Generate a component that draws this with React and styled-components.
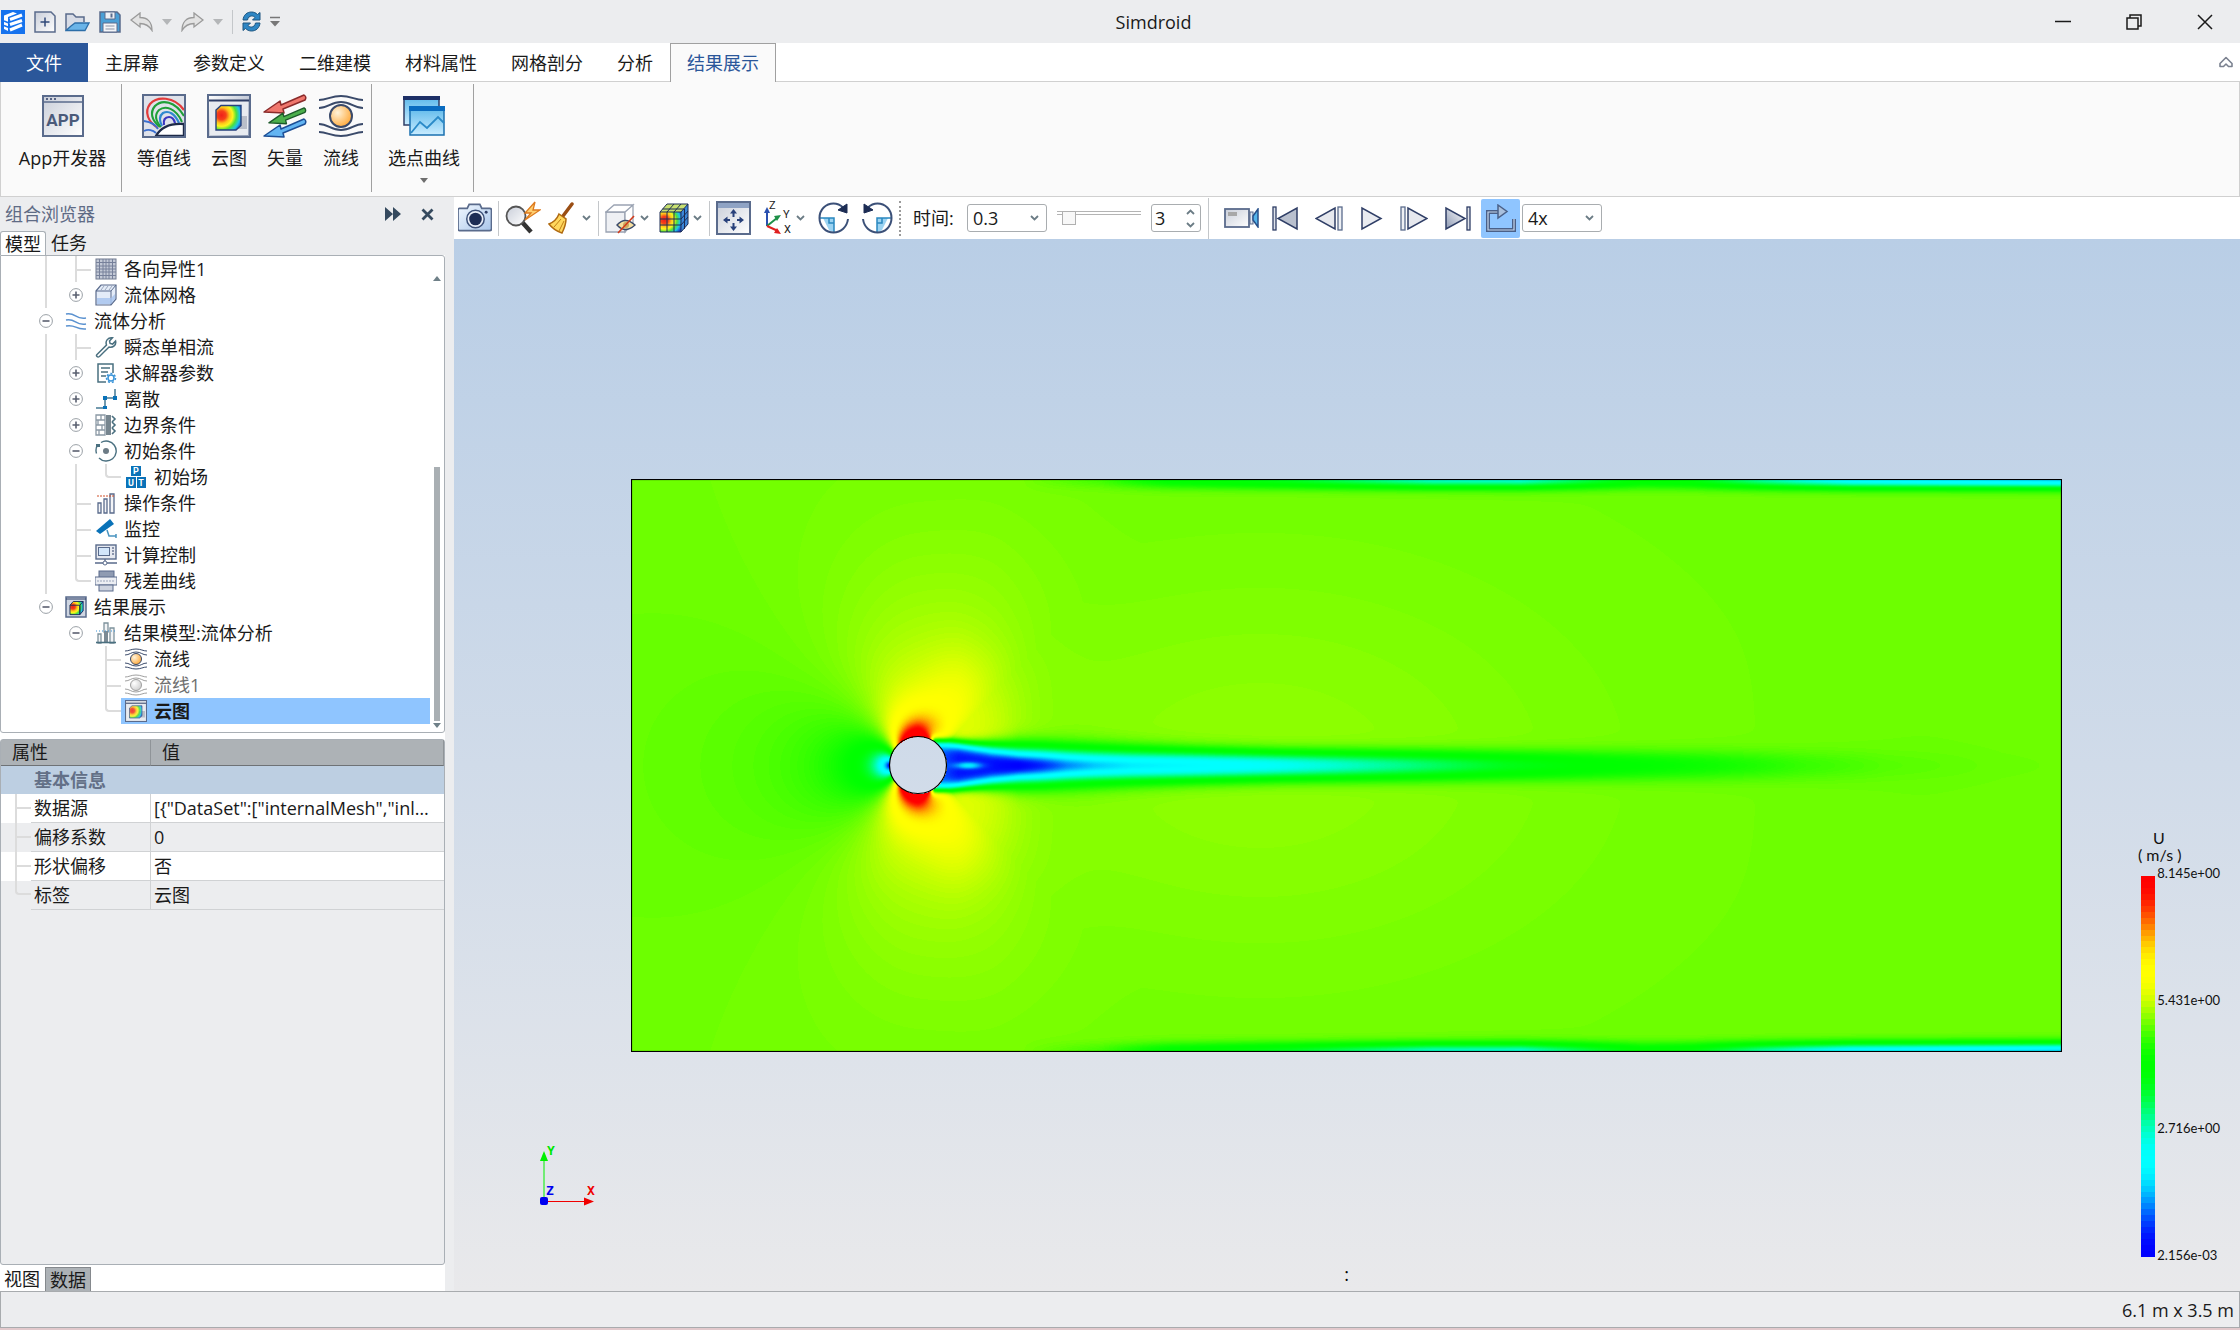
import React, { useLayoutEffect, useRef } from "react";
import styled, { createGlobalStyle, css } from "styled-components";

const GlobalStyle = createGlobalStyle`
  *, *::before, *::after { box-sizing: border-box; }
  body { margin: 0; background: #ecedef; }
  body, button, input, select, table {
    font-family: "Open Sans", "Noto Sans CJK SC", sans-serif;
    font-size: 18px;
    line-height: 26px;
    color: #1a1a1a;
  }
  button { border: 0; padding: 0; background: none; }
  svg { display: block; flex: none; }
`;

const NAVY = "#2f3e66";
const STEEL = "#5a6b8c";
const TEAL = "#4a7080";
const BLUE = "#0a72b8";

/* ---------- shared gradients ---------- */
const Defs = styled.svg`
  width: 0;
  height: 0;
  position: absolute;
`;

const Gradients = () => (
  <Defs aria-hidden="true">
    <defs>
      <linearGradient id="grey" x1="0" y1="0" x2="1" y2="1">
        <stop offset="0" stopColor="#c9ced9" />
        <stop offset="1" stopColor="#ffffff" />
      </linearGradient>
      <linearGradient id="steel" x1="0" y1="0" x2="1" y2="1">
        <stop offset="0" stopColor="#ffffff" />
        <stop offset="1" stopColor="#8d99b3" />
      </linearGradient>
      <linearGradient id="sky" x1="0" y1="0" x2="0" y2="1">
        <stop offset="0" stopColor="#5cb8ea" />
        <stop offset="1" stopColor="#c9ecff" />
      </linearGradient>
      <linearGradient id="ice" x1="0" y1="0" x2="1" y2="1">
        <stop offset="0" stopColor="#f2f8ff" />
        <stop offset="1" stopColor="#a9c6ea" />
      </linearGradient>
      <radialGradient id="ball" cx=".35" cy=".35" r=".7">
        <stop offset="0" stopColor="#fff3da" />
        <stop offset="1" stopColor="#ffa93a" />
      </radialGradient>
      <radialGradient id="ballGrey" cx=".35" cy=".35" r=".7">
        <stop offset="0" stopColor="#ffffff" />
        <stop offset="1" stopColor="#cfcfcf" />
      </radialGradient>
      <radialGradient id="heat" cx=".22" cy=".4" r=".9">
        <stop offset="0" stopColor="#f0201a" />
        <stop offset=".2" stopColor="#f5401a" />
        <stop offset=".36" stopColor="#ffc21a" />
        <stop offset=".5" stopColor="#fdf51d" />
        <stop offset=".66" stopColor="#4fe03a" />
        <stop offset=".82" stopColor="#1fc6e8" />
        <stop offset="1" stopColor="#1838c8" />
      </radialGradient>
    </defs>
  </Defs>
);

const Svg = ({ w, h, children, vb }) => (
  <svg width={w} height={h} viewBox={vb || `0 0 ${w} ${h}`} fill="none" aria-hidden="true">
    {children}
  </svg>
);

/* ---------- title bar icons ---------- */
const Logo = () => (
  <Svg w={24} h={24}>
    <rect width="24" height="24" fill="#1673ee" />
    <path d="M3 5.500 12 2l4 1.500L7 7v14l-4-2z" fill="#fff" />
    <path d="M9 9.500 21 5M9 14.500l12-4M9 20l12-5" stroke="#fff" strokeWidth="3" />
    <path d="M3 11l5 2M3 15.500l5 2" stroke="#1673ee" strokeWidth="1.500" />
  </Svg>
);
const NewIcon = () => (
  <Svg w={22} h={22}>
    <path d="M1 1h16l4 4v16H1z" fill="url(#grey)" stroke={STEEL} strokeWidth="1.500" />
    <path d="M11 6.500v9M6.500 11h9" stroke="#30497a" strokeWidth="1.500" />
  </Svg>
);
const OpenIcon = () => (
  <Svg w={25} h={20}>
    <path d="M1 18V2h7l3 3h8v5" fill="#d8dce6" stroke={STEEL} strokeWidth="1.500" />
    <path d="M1 18.500 6 14l4-3h14l-4 7.500z" fill="#6ab4e8" stroke="#2c6ea8" strokeWidth="1.300" />
  </Svg>
);
const SaveIcon = () => (
  <Svg w={22} h={22}>
    <path d="M1 1h17l3 3v17H1z" fill="#4a9fd6" stroke={STEEL} strokeWidth="1.500" />
    <path d="M6 1h10v7H6z" fill="#eef1f6" stroke={STEEL} />
    <path d="M12.500 2.500v4" stroke={STEEL} strokeWidth="2" />
    <path d="M4 12h14v9H4z" fill="#f4f5f8" stroke={STEEL} />
    <path d="M6.500 15h9M6.500 18h9" stroke="#8b93a5" />
  </Svg>
);
const UndoIcon = ({ flip }) => (
  <Svg w={23} h={20}>
    <g transform={flip ? "matrix(-1 0 0 1 23 0)" : undefined}>
      <path d="M1 8 10 1v4.500c7 0 12 4 12 13-3-5-6-7-12-7V15z" fill="#e3e3e3" stroke="#9a9a9a" strokeWidth="1.300" />
    </g>
  </Svg>
);
const Caret = ({ color = "#b4b6b8" }) => (
  <Svg w={10} h={6}>
    <path d="M0 0h10L5 6z" fill={color} />
  </Svg>
);
const MoreIcon = () => (
  <Svg w={10} h={12}>
    <path d="M0 1.500h10" stroke="#777" strokeWidth="1.500" />
    <path d="M0 5h10L5 10.500z" fill="#777" />
  </Svg>
);
const RefreshIcon = () => (
  <Svg w={19} h={21}>
    <path d="M1 9C1.500 4 5 1 9.500 1c2.500 0 4.500 1 6 2.500L18 1.500V9h-7.500l2.500-2.500C12 5.400 11 5 9.500 5 7.500 5 6 6.500 5.500 9z" fill="#2e86c4" stroke="#1c5580" />
    <path d="M18 12c-.5 5-4 8-8.500 8-2.500 0-4.500-1-6-2.500L1 19.500V12h7.500L6 14.500c1 1.100 2 1.500 3.500 1.500 2 0 3.500-1.500 4-4z" fill="#2e86c4" stroke="#1c5580" />
  </Svg>
);

/* ---------- ribbon icons ---------- */
const AppIcon = () => (
  <Svg w={42} h={42}>
    <rect x="1" y="1" width="40" height="40" fill="url(#grey)" stroke={STEEL} strokeWidth="2" />
    <path d="M1 7h40" stroke={STEEL} strokeWidth="1.500" />
    <path d="M4 4h2M8 4h2M12 4h2" stroke={NAVY} strokeWidth="1.500" />
    <text x="21" y="31" textAnchor="middle" fontFamily="Roboto, sans-serif" fontWeight="700" fontSize="17" fill="#4a5a7a">APP</text>
  </Svg>
);
const ContourIcon = () => (
  <Svg w={44} h={44}>
    <rect x="1.500" y="1.500" width="41" height="41" fill="#dfe2ea" />
    <path d="M16 34C6 28 2 18 8 10 15 2 32 2 42 16" stroke="#e23b3b" strokeWidth="2.200" />
    <path d="M18 33C9 26 8 18 13 12c7-7 20-5 29 10" stroke="#1fa038" strokeWidth="2.200" />
    <path d="M19 33c-6-7-6-13-2-17 6-5 17-2 23 12" stroke="#1fa038" strokeWidth="2" />
    <path d="M20 32c-3-6-3-10 1-13 6-3 12 1 16 10" stroke="#2f88cf" strokeWidth="2.200" />
    <path d="M22 31c-1-5 1-8 5-8 3 0 5 2 6 6" stroke="#3a35c0" strokeWidth="2.200" />
    <path d="M2 27c6 1 12 4 14 8M2 37c4-2 9-1 12 2" stroke="#3a6fd0" strokeWidth="1.800" />
    <path d="M14 42c5-9 14-13 28-12v12z" fill="#fff" stroke="#1e2a48" strokeWidth="2.400" />
    <rect x="1" y="1" width="42" height="42" stroke={STEEL} strokeWidth="2" />
  </Svg>
);
const CloudIcon = ({ size = 44, pale }) => (
  <Svg w={size} h={size} vb="0 0 44 44">
    <rect x="1" y="1" width="42" height="42" fill={pale ? "#d7dbe2" : "url(#steel)"} stroke={STEEL} strokeWidth="2" />
    <rect x="3" y="7" width="38" height="34" fill="#e8ebf0" />
    <path d="M2 6.500h40" stroke={NAVY} strokeWidth="1.800" />
    <path d="M28 22h12v13H20z" fill="#b9bec9" />
    <path d="M14 11.500h20v20L29 36H9V16z" fill="url(#heat)" stroke="#25407c" strokeWidth="1.400" opacity={pale ? 0.85 : 1} />
  </Svg>
);
const Arrow3 = ({ y, fill, stroke }) => (
  <path d={`M1 ${y + 17} 17 ${y + 6}l1 4L41 ${y}q3 2 1 5L20 ${y + 14}l1 4z`} fill={fill} stroke={stroke} strokeWidth="1.500" strokeLinejoin="round" />
);
const VectorIcon = () => (
  <Svg w={44} h={44}>
    <Arrow3 y={1} fill="#f0776d" stroke="#8a2b2b" />
    <g transform="translate(5 13) scale(.88)"><Arrow3 y={1} fill="#4cb04c" stroke="#1d5a2a" /></g>
    <Arrow3 y={25} fill="#62b4f2" stroke="#1d4f96" />
  </Svg>
);
const StreamIcon = ({ size = 44, grey }) => {
  const s = grey ? "#a0a0a0" : "#3a4a6a";
  return (
    <Svg w={size} h={size} vb="0 0 44 44">
      <path d="M0 6c8 0 12-4 22-4s14 4 22 4M0 14c9 0 12-6 22-6s13 6 22 6M0 30c9 0 12 6 22 6s13-6 22-6M0 38c8 0 12 4 22 4s14-4 22-4" stroke={s} strokeWidth="2" />
      <circle cx="22" cy="22" r="11" fill={grey ? "url(#ballGrey)" : "url(#ball)"} stroke={s} strokeWidth="2" />
    </Svg>
  );
};
const CurveIcon = () => (
  <Svg w={42} h={42}>
    <rect x="1" y="2" width="35" height="28" fill="url(#sky)" stroke={NAVY} strokeWidth="1.500" />
    <rect x="0" y="1" width="37" height="4" fill="#1c2f66" />
    <rect x="7" y="12" width="34" height="28" fill="url(#sky)" stroke="#1a70b0" strokeWidth="1.500" />
    <rect x="6" y="11" width="36" height="5" fill="#0a6cc0" />
    <path d="m8 38 9-11 7 6 11-11 6 6" stroke="#2a8ac8" strokeWidth="1.800" />
  </Svg>
);

/* ---------- view toolbar icons ---------- */
const CameraIcon = () => (
  <Svg w={34} h={30} vb="0 0 35 30">
    <path d="M1.500 5h8l2-4h11l2 4h8q2 0 2 2v19q0 2-2 2h-31q-1.500 0-1.500-2V7q0-2 1.500-2z" fill="url(#ice)" stroke={STEEL} strokeWidth="1.800" />
    <circle cx="18" cy="16" r="9" fill="#e8eef8" stroke="#3c5078" strokeWidth="1.500" />
    <circle cx="18" cy="16" r="6.500" fill="#1c2c54" />
    <circle cx="29" cy="9" r="1.500" fill={NAVY} />
  </Svg>
);
const SearchIcon = () => (
  <Svg w={36} h={34}>
    <path d="m17 21 9 10" stroke="#333" strokeWidth="4.500" />
    <circle cx="11" cy="15" r="9.500" fill="url(#grey)" stroke="#555" strokeWidth="1.800" />
    <path d="M30 1 20 12h6l-6 7 15-10h-7z" fill="#ffcf70" stroke="#dd7a1e" strokeWidth="1.300" />
  </Svg>
);
const BroomIcon = () => (
  <Svg w={27} h={32}>
    <path d="m24 2-9 12" stroke="#9a4e14" strokeWidth="3.500" strokeLinecap="round" />
    <path d="M11 12l7 5c0 6-2 10-4 14C8 29 4 26 1 22c5-2 8-5 10-10z" fill="#ffd75e" stroke="#b06a10" strokeWidth="1.500" />
    <path d="M13 17 6 25M16 19l-5 10" stroke="#c08018" />
  </Svg>
);
const Chevron = ({ up }) => (
  <Svg w={9} h={6}>
    <path d={up ? "M1 5 4.500 1.500 8 5" : "M1 1l3.500 3.500L8 1"} stroke="#6b7c85" strokeWidth="1.800" />
  </Svg>
);
const BoxIcon = () => (
  <Svg w={31} h={31}>
    <path d="M1 9h19v20H1z" fill="#eef0f4" stroke="#9aa3b2" strokeWidth="1.300" />
    <path d="M1 9 9 2h19l-8 7zM28 2v18l-8 9V9z" fill="#fff" stroke="#9aa3b2" strokeWidth="1.300" />
    <path d="M12 22q8-9 18 0-10 9-18 0z" fill="#f6dfa0" stroke="#3a4a6a" strokeWidth="1.400" />
    <circle cx="21" cy="22" r="3" fill="#caa860" />
    <path d="M13 30 29 13" stroke="#d23a1a" strokeWidth="1.600" />
  </Svg>
);
const CubeIcon = ({ size = 30 }) => (
  <Svg w={size} h={size} vb="0 0 30 30">
    <path d="M1 9h21v20H1z" fill="url(#heat)" />
    <path d="M1 9 8 1h21l-7 8z" fill="#c8e070" />
    <path d="m22 9 7-8v20l-7 8z" fill="#3b86d8" />
    <path d="M1 9h21v20H1zM1 16h21M1 22h21M8 9v20M15 9v20M1 9l7-8h21l-7 8M29 1v20l-7 8M8 9l7-8M15 9l7-8M3.500 6h22v20M22 16l7-8M22 22l7-8" stroke="#1c2c54" strokeWidth="1" />
  </Svg>
);
const FitIcon = () => (
  <Svg w={35} h={34}>
    <rect x="1" y="1" width="33" height="32" fill="url(#grey)" stroke={STEEL} strokeWidth="2" />
    <rect x="2" y="2" width="31" height="5" fill="#8fa3c4" />
    <path d="M17.500 11v5M17.500 22v5M10 19h4M21 19h4" stroke="#28407a" strokeWidth="2" />
    <path d="M14 12.500 17.500 8l3.500 4.500zM14 25.500l3.500 4.500 3.500-4.500zM11.500 15.500 7 19l4.500 3.500zM23.500 15.500 28 19l-4.500 3.500z" fill="#28407a" />
  </Svg>
);
const AxesIcon = () => (
  <Svg w={28} h={34}>
    <path d="M3 25V10" stroke="#2a50b0" strokeWidth="2" />
    <path d="M0 12 3 6l3 6z" fill="#2a50b0" />
    <path d="m3 25 10-8" stroke="#1e9048" strokeWidth="2" />
    <path d="m10 15 7-1-4 6z" fill="#1e9048" />
    <path d="m3 25 11 5" stroke="#e02020" strokeWidth="2" />
    <path d="m13 27 4 6-7-1z" fill="#e02020" />
    <g fontFamily="Roboto, sans-serif" fontSize="11" fill="#222">
      <text x="5" y="8">Z</text>
      <text x="19" y="17">Y</text>
      <text x="20" y="32">X</text>
    </g>
  </Svg>
);
const RotateIcon = ({ flip }) => (
  <Svg w={31} h={32}>
    <g transform={flip ? "matrix(-1 0 0 1 31 0)" : undefined}>
      <path d="M1.500 16H16v14C7 30 1.500 24 1.500 16z" fill="#fff" />
      <path d="M5 16h11v14q-3 0-5-2z" fill="#9bd3f2" />
      <path d="M1.500 16H16v14M11 16v5h5" stroke="#2a88c0" strokeWidth="1.500" />
      <path d="M30 17c-1 8-7 13.500-14.500 13.500C8 30.500 1.500 24.500 1.500 16S8 1.500 15.500 1.500c4 0 7 1.500 9.500 4" stroke="#3b5078" strokeWidth="2" />
      <path d="M29 2v9l-9-3z" fill="#1c2c54" stroke="#1c2c54" />
    </g>
  </Svg>
);
const VideoIcon = () => (
  <Svg w={36} h={20}>
    <rect x="1" y="1" width="24" height="18" fill="url(#grey)" stroke={STEEL} strokeWidth="1.800" />
    <rect x="4" y="4" width="9" height="4" fill="#a8a8a8" />
    <rect x="26" y="4" width="3" height="12" fill="#dfe6f2" stroke={STEEL} />
    <path d="m29 8 5-7v18l-5-7z" fill="#55b4ea" stroke="#28508a" strokeWidth="1.500" />
  </Svg>
);
const FirstIcon = ({ flip }) => (
  <Svg w={26} h={25}>
    <g transform={flip ? "matrix(-1 0 0 1 26 0)" : undefined}>
      <path d="M25 2v21L6 12.500z" fill={flip ? "url(#steel)" : "#b9c0ce"} stroke={NAVY} strokeWidth="1.500" />
      <rect x="1" y="1" width="3" height="23" fill="#dfe3ea" stroke={NAVY} strokeWidth="1.300" />
    </g>
  </Svg>
);
const StepIcon = ({ flip }) => (
  <Svg w={28} h={25}>
    <g transform={flip ? "matrix(-1 0 0 1 28 0)" : undefined}>
      <path d="M20 2v21L1 12.500z" fill="#e6e8ee" stroke={NAVY} strokeWidth="1.500" />
      <rect x="23" y="1" width="4" height="23" fill="#eef0f4" stroke={STEEL} strokeWidth="1.300" />
    </g>
  </Svg>
);
const PlayIcon = () => (
  <Svg w={23} h={25}>
    <path d="M2 2v21l19-10.500z" fill="#e9ebf0" stroke={NAVY} strokeWidth="1.500" />
  </Svg>
);
const LoopIcon = () => (
  <Svg w={30} h={28}>
    <path d="M13 8H2v18h26V15" stroke="#4a6088" strokeWidth="4" />
    <path d="M13 8H2v18h26V15" stroke="#c6d6ea" strokeWidth="1.200" />
    <path d="m12 1 9 6.500-9 6.500z" fill="#a9c0dd" stroke="#4a6088" strokeWidth="1.500" />
  </Svg>
);

/* ---------- tree icons ---------- */
const TreeIcons = {
  mesh: () => (
    <Svg w={22} h={22}>
      <rect x="1" y="1" width="20" height="20" fill="#c3c9d6" stroke="#707a90" />
      <path d="M4.500 1v20M8 1v20M11 1v20M14 1v20M17.500 1v20M1 4.500h20M1 8h20M1 11h20M1 14h20M1 17.500h20" stroke="#76809a" />
    </Svg>
  ),
  fluidMesh: () => (
    <Svg w={22} h={22}>
      <path d="M1 7 6 1h15v14l-5 6H1z" fill="#e4ecf8" stroke={STEEL} strokeWidth="1.200" />
      <path d="M1 7h15v14M16 7l5-6" stroke={STEEL} />
      <path d="M9 2 6 6M13 2l-3 4M17 2l-3 4" stroke="#9aa6bc" />
      <path d="M2 14h14l4-4v5l-4 5H2z" fill="#a5c3ee" opacity=".8" />
    </Svg>
  ),
  fluid: () => (
    <Svg w={22} h={18}>
      <path d="M1 2c10-2 9 6 20 4M1 8c10-2 9 6 20 4M1 14c10-2 9 4 20 3" stroke="#5b92d0" strokeWidth="1.500" />
    </Svg>
  ),
  wrench: () => (
    <Svg w={22} h={22}>
      <path d="M2 18.500 11.500 9C10 5 13 1 17.500 1.800L14.500 5l.6 2.500 2.500.6 3-3C21.500 9 18 12 14 11l-9.500 9.500q-1.500 1-2.500 0-1-1 0-2z" fill="#fff" stroke={TEAL} strokeWidth="1.500" />
    </Svg>
  ),
  solver: () => (
    <Svg w={22} h={22}>
      <path d="M11 20H3V2h15v9" stroke={TEAL} strokeWidth="1.500" />
      <path d="M6 6h9M6 10h7M6 14h5" stroke={TEAL} strokeWidth="1.400" />
      <circle cx="16" cy="16" r="3" stroke="#3a94d8" strokeWidth="1.500" />
      <circle cx="16" cy="16" r="4.500" stroke="#3a94d8" strokeWidth="1.500" strokeDasharray="2 2" />
    </Svg>
  ),
  discrete: () => (
    <Svg w={22} h={22}>
      <path d="M1 20h9V10h10V1" stroke="#467a94" strokeWidth="1.500" />
      <path d="M8 18h4v3H8zM8 8h4v4H8zM18 8h4v4h-4z" fill={BLUE} />
    </Svg>
  ),
  boundary: () => (
    <Svg w={22} h={22}>
      <path d="M1 1h9v20H1zM1 6h9M1 11h9M1 16h9M6 1v5M3 6v5M7 11v5M4 16v5" stroke="#8b99a5" strokeWidth="1.300" />
      <rect x="11" y="1" width="5" height="20" fill="#76858f" />
      <path d="m17 2 3 3-3 3M17 8l3 3-3 3M17 14l3 3-3 3" stroke={TEAL} strokeWidth="1.600" />
    </Svg>
  ),
  initial: () => (
    <Svg w={22} h={22}>
      <path d="M6 2.500A10 10 0 1 1 4 18M3 4.500a10 10 0 0 0-1.500 9" stroke={TEAL} strokeWidth="1.400" />
      <path d="M1 4h4v3H1z" fill={TEAL} />
      <circle cx="11" cy="11" r="3" fill="#6c7b85" />
    </Svg>
  ),
  field: () => (
    <Svg w={22} h={22}>
      <path d="M6 0h10v10H6zM1 11h10v11H1zM12 11h9v11h-9z" fill={BLUE} />
      <g fontFamily="Roboto, sans-serif" fontSize="9" fontWeight="700" fill="#fff" textAnchor="middle">
        <text x="11" y="8">P</text>
        <text x="6" y="20">U</text>
        <text x="16" y="20">T</text>
      </g>
    </Svg>
  ),
  operation: () => (
    <Svg w={22} h={22}>
      <path d="M3 11h3v10H3zM9 7h3v14H9zM15 2h4v19h-4z" fill="#f4f5f8" stroke={STEEL} strokeWidth="1.300" />
      <path d="M2 4h18" stroke="#d0502a" strokeDasharray="2 1" />
    </Svg>
  ),
  monitor: () => (
    <Svg w={22} h={22}>
      <path d="M1 13 15 1l4 5L5 16z" fill={BLUE} />
      <path d="m12 12 2 6h7M21 16v4" stroke="#4a94c0" strokeWidth="1.500" />
    </Svg>
  ),
  control: () => (
    <Svg w={22} h={22}>
      <rect x="1" y="1" width="20" height="14" fill="#e6e9f0" stroke={STEEL} strokeWidth="1.400" />
      <rect x="3.500" y="3.500" width="11" height="8" fill="#d3e6fa" stroke={STEEL} />
      <path d="M17 4h2M17 7h2M17 10h2" stroke={NAVY} />
      <path d="M10 15v3M0 19h22" stroke={STEEL} strokeWidth="1.300" />
      <circle cx="10" cy="19" r="2" fill="#fff" stroke={STEEL} />
    </Svg>
  ),
  residual: () => (
    <Svg w={22} h={22}>
      <rect x="4" y="1" width="15" height="7" fill="#8f9bb2" stroke={STEEL} />
      <rect x="0" y="7" width="22" height="8" fill="#eceef3" stroke={STEEL} />
      <path d="M2 11h18" stroke="#9aa5ba" strokeDasharray="2 1" />
      <rect x="4" y="15" width="14" height="6" fill="#cdd3df" stroke={STEEL} />
    </Svg>
  ),
  results: () => (
    <Svg w={22} h={22}>
      <rect x="1" y="1" width="20" height="20" fill="#cfd6e2" stroke={STEEL} strokeWidth="1.500" />
      <path d="M1 3h20" stroke={NAVY} />
      <g transform="translate(4.500 5) scale(.47)">
        <path d="M1 9h21v20H1zM1 9 8 1h21l-7 8M29 1v20l-7 8V9" fill="url(#heat)" stroke="#1c2c54" strokeWidth="2" />
      </g>
    </Svg>
  ),
  model: () => (
    <Svg w={22} h={22}>
      <path d="M3 12h3v9H3zM15 6h4v15h-4zM9 1h4v9H9z" fill="#f2f4f6" stroke="#7e929c" strokeWidth="1.300" />
      <path d="M9 9h4v12H9z" fill="#7c8b95" />
      <path d="M1 20.500h20" stroke={TEAL} strokeWidth="1.600" />
      <path d="M1 9h20" stroke="#3a94d8" strokeDasharray="1 2" />
    </Svg>
  ),
  stream: () => <StreamIcon size={22} />,
  streamOff: () => <StreamIcon size={22} grey />,
  cloud: () => <CloudIcon size={22} pale />,
};

/* ---------- frame ---------- */
const Page = styled.div`
  min-height: 100vh;
  display: flex;
  flex-direction: column;
  background: #ecedef;
`;
const TitleBar = styled.header`
  height: 43px;
  flex: none;
  display: flex;
  align-items: center;
`;
const QuickAccess = styled.div`
  display: flex;
  align-items: center;
  gap: 9px;
  padding-left: 1px;
`;
const IconButton = styled.button`
  display: flex;
  align-items: center;
  justify-content: center;
`;
const Rule = styled.span`
  width: 1px;
  height: ${(p) => p.$h || 24}px;
  background: ${(p) => (p.$dotted ? "none" : "#c4c7ca")};
  border-left: ${(p) => (p.$dotted ? "2px dotted #9a9a9a" : "0")};
`;
const AppName = styled.h1`
  flex: 1;
  margin: 0;
  font-size: 18px;
  font-weight: 400;
  text-align: center;
`;
const WindowButton = styled(IconButton)`
  width: 71px;
  height: 43px;
`;

const TabBar = styled.nav`
  height: 39px;
  flex: none;
  display: flex;
  background: #fff;
  border-bottom: 1px solid #d0d0d0;
`;
const Tab = styled.button`
  height: 39px;
  padding: 0 17px;
  ${(p) => p.$file && css`
    padding: 0 26px;
    background: #2b579a;
    color: #fff;
  `}
  ${(p) => p.$active && css`
    padding: 0 16px;
    background: #fafafa;
    color: #2b579a;
    border: 1px solid #a0a0a0;
    border-bottom: 0;
  `}
`;
const Collapse = styled(IconButton)`
  margin-left: auto;
  padding-right: 7px;
`;

const Ribbon = styled.div`
  height: 115px;
  flex: none;
  display: flex;
  background: #fafafa;
  border: 1px solid #d0d0d0;
  border-top: 0;
`;
const RibbonGroup = styled.div`
  display: flex;
  margin: 2px 0 4px;
  padding: 0 2px 0 5px;
  border-right: 1px solid #a0a0a0;
`;
const RibbonButton = styled.button`
  display: flex;
  flex-direction: column;
  align-items: center;
  min-width: ${(p) => p.$min || 56}px;
  padding: 10px 4px 0;
  gap: 7px;
`;
const IconBox = styled.span`
  height: 44px;
  display: flex;
  align-items: center;
`;

/* ---------- work area ---------- */
const Work = styled.div`
  flex: 1;
  display: grid;
  grid-template-columns: 454px minmax(0, 1fr);
`;
const Side = styled.aside`
  display: flex;
  flex-direction: column;
  padding-right: 9px;
`;
const PanelHead = styled.div`
  height: 34px;
  flex: none;
  display: flex;
  align-items: center;
  padding: 0 11px 0 5px;
  gap: 20px;
  color: #5f6b85;
`;
const PanelTitle = styled.h2`
  flex: 1;
  margin: 0;
  font-size: 18px;
  font-weight: 400;
`;
const PanelTabs = styled.div`
  height: 24px;
  flex: none;
  display: flex;
  gap: 1px;
`;
const PanelTab = styled.button`
  height: 25px;
  line-height: 25px;
  padding: 0 4px;
  ${(p) => p.$active && css`
    background: #fff;
    border: 1px solid #a9afb5;
    border-bottom: 0;
    border-radius: 3px 3px 0 0;
  `}
  ${(p) => p.$dark && css`
    background: #adb2b6;
    border: 1px solid #85898d;
    border-bottom: 0;
  `}
`;
const Lower = styled.div`
  flex: 1;
  display: flex;
  flex-direction: column;
  background: #fff;
`;
const TreeBox = styled.div`
  display: flex;
  background: #fff;
  border: 1px solid #a9afb5;
  border-radius: 0 3px 3px 3px;
`;
const Tree = styled.ul`
  flex: 1;
  margin: 0;
  padding: 0 0 8px 30px;
  list-style: none;
`;
const TreeRow = styled.li`
  height: 26px;
  display: flex;
`;
const GUIDE = "linear-gradient(#dcdcdc, #dcdcdc)";
const Slot = styled.span`
  width: 30px;
  flex: none;
  display: flex;
  ${(p) => p.$kind === "line" && css`background: ${GUIDE} 14px 0 / 2px 100% no-repeat;`}
  ${(p) => p.$kind === "tee" && css`
    background: ${GUIDE} 14px 0 / 2px 100% no-repeat, ${GUIDE} 14px 13px / 16px 2px no-repeat;
  `}
  ${(p) => p.$kind === "end" && css`
    &::before {
      content: "";
      width: 16px;
      height: 14px;
      margin-left: 14px;
      border: solid #dcdcdc;
      border-width: 0 0 2px 2px;
      border-radius: 0 0 0 4px;
    }
  `}
`;
const Expander = styled.button`
  width: 14px;
  height: 14px;
  margin: 6px 0 0 8px;
`;
const Node = styled.span`
  flex: 1;
  display: flex;
  align-items: center;
  gap: 7px;
  padding-left: 4px;
  color: ${(p) => (p.$dim ? "#707070" : "#1a1a1a")};
  background: ${(p) => (p.$selected ? "#8fc5ff" : "none")};
  font-weight: ${(p) => (p.$selected ? 700 : 400)};
`;
const ScrollColumn = styled.div`
  width: 14px;
  display: flex;
  flex-direction: column;
  align-items: center;
  padding: 20px 0 4px;
`;
const ScrollThumb = styled.div`
  width: 6px;
  height: 254px;
  margin: auto 0 2px;
  background: #a9afb3;
`;

const PropBox = styled.div`
  flex: 1;
  margin-top: 6px;
  background: #ecedef;
  border: 1px solid #a9afb5;
  border-radius: 3px;
`;
const PropTable = styled.table`
  width: 100%;
  table-layout: fixed;
  border-collapse: separate;
  border-spacing: 0;
`;
const HeadCell = styled.th`
  width: ${(p) => p.$w || "auto"};
  height: 26px;
  padding: 0 11px;
  line-height: 25px;
  text-align: left;
  font-weight: 400;
  background: #adb2b6;
  border-bottom: 1px solid #6e7276;
  border-right: 1px solid #8f9498;
`;
const GroupCell = styled.th`
  height: 28px;
  padding: 0 0 0 33px;
  text-align: left;
  font-weight: 700;
  color: #637087;
  background: #bdcfe2;
`;
const PropRow = styled.tr`
  background: ${(p) => (p.$alt ? "#ecedef" : "#fff")};
`;
const PropName = styled.th`
  padding: 0;
  font-weight: 400;
  text-align: left;
  border-right: 1px solid #d0d2d4;
`;
const PropNameInner = styled.span`
  display: flex;
  height: 29px;
`;
const PropLabel = styled.span`
  flex: 1;
  padding-left: 3px;
  line-height: 28px;
  border-bottom: 1px solid #d0d2d4;
`;
const PropValue = styled.td`
  height: 29px;
  padding: 0 7px 0 3px;
  line-height: 28px;
  white-space: nowrap;
  overflow: hidden;
  text-overflow: ellipsis;
  border-bottom: 1px solid #d0d2d4;
`;
const BottomTabs = styled.div`
  height: 26px;
  flex: none;
  display: flex;
  align-items: flex-start;
  gap: 1px;
  padding-top: 2px;
  overflow: hidden;
`;

const Main = styled.main`
  display: flex;
  flex-direction: column;
`;
const Toolbar = styled.div`
  height: 42px;
  flex: none;
  display: flex;
  align-items: center;
  padding: 1px 0 1px 4px;
  gap: 6px;
  background: #fff;
`;
const ToolGroup = styled.div`
  display: flex;
  align-items: center;
  gap: ${(p) => p.$gap}px;
  margin: 0 ${(p) => p.$after || 0}px 0 ${(p) => p.$before || 0}px;
`;
const FieldLabel = styled.label`
  width: 40px;
  white-space: nowrap;
`;
const Combo = styled.span`
  width: 80px;
  display: grid;
  grid-template-columns: 1fr 16px;
  align-items: center;
  border: 1px solid #a9adb0;
  border-radius: 3px;
  & > * { grid-row: 1; }
  & > svg { grid-column: 2; }
`;
const Select = styled.select`
  grid-column: 1 / 3;
  height: 26px;
  padding: 0 5px;
  appearance: none;
  border: 0;
  background: none;
`;
const Slider = styled.input`
  width: 84px;
  height: 20px;
  margin: 0;
  appearance: none;
  background: linear-gradient(#fff, #fff) 0 4px / 100% 2px no-repeat,
    linear-gradient(#b4b4b4, #b4b4b4) 0 3px / 100% 4px no-repeat;
  &::-webkit-slider-thumb {
    appearance: none;
    width: 14px;
    height: 14px;
    background: #f8f8f8;
    border: 1px solid #b0b0b0;
  }
`;
const Spin = styled.span`
  width: 50px;
  height: 28px;
  display: flex;
  align-items: center;
  border: 1px solid #a9adb0;
  border-radius: 3px;
`;
const SpinInput = styled.input`
  width: 34px;
  height: 26px;
  padding: 0 3px;
  border: 0;
  background: none;
  appearance: textfield;
  &::-webkit-inner-spin-button { appearance: none; }
`;
const SpinArrows = styled.span`
  display: grid;
  gap: 7px;
`;
const LoopButton = styled(IconButton)`
  width: 39px;
  height: 39px;
  background: #8fc5ff;
  border-radius: 2px;
`;

const Viewport = styled.section`
  flex: 1;
  position: relative;
  background: linear-gradient(#b9cee6, #d0dbe9 50%, #e9e9eb);
`;
const FieldCanvas = styled.canvas`
  position: absolute;
  left: 9.91%;
  top: 22.81%;
  width: 80.12%;
  display: block;
`;
const Triad = styled.div`
  position: absolute;
  left: 4.500%;
  bottom: 7.600%;
`;
const StepMark = styled.span`
  position: absolute;
  left: 49.850%;
  bottom: 4px;
  color: #000;
`;
const Legend = styled.figure`
  position: absolute;
  right: 20px;
  bottom: 34px;
  margin: 0;
  width: 82px;
  font-family: Lato, sans-serif;
  color: #111;
`;
const LegendTitle = styled.figcaption`
  width: 42px;
  margin-bottom: 13px;
  font-size: 16px;
  line-height: 17px;
  text-align: center;
  white-space: nowrap;
`;
const Scale = styled.div`
  display: flex;
  gap: 2px;
`;
const Ramp = styled.div`
  width: 15px;
  height: 381px;
  margin-left: 3px;
  display: flex;
  flex-direction: column;
`;
const Band = styled.span`
  flex: 1;
`;
const Ticks = styled.div`
  height: 396px;
  margin: -10px 0 -5px;
  display: flex;
  flex-direction: column;
  justify-content: space-between;
  font-size: 13px;
  line-height: 14px;
`;

const StatusBar = styled.footer`
  height: 37px;
  flex: none;
  display: flex;
  align-items: center;
  justify-content: flex-end;
  padding-right: 5px;
  border: 1px solid #a8abae;
`;
const BottomEdge = styled.div`
  height: 2px;
  flex: none;
  background: #e2c9cc;
`;

/* ---------- velocity field ---------- */
const clamp = (v, a, b) => Math.min(b, Math.max(a, v));
const smooth = (v, a, b) => {
  const t = clamp((v - a) / (b - a), 0, 1);
  return t * t * (3 - 2 * t);
};
const lookup = (table, x) => {
  if (x <= table[0][0]) return table[0][1];
  for (let i = 1; i < table.length; i++) {
    if (x <= table[i][0]) {
      const [x0, y0] = table[i - 1];
      const [x1, y1] = table[i];
      return y0 + ((y1 - y0) * (x - x0)) / (x1 - x0);
    }
  }
  return table[table.length - 1][1];
};
/* blue - cyan - green - yellow - red, eased between the five stops */
const rampColor = (v) => {
  const t = clamp(v, 0, 1) * 4;
  const seg = Math.min(3, Math.floor(t));
  const up = Math.round(255 * (0.5 - 0.5 * Math.cos(Math.PI * (t - seg))));
  if (seg === 0) return [0, up, 255];
  if (seg === 1) return [0, 255, 255 - up];
  if (seg === 2) return [up, 255, 0];
  return [255, 255 - up, 0];
};

const FREE = 0.614;
const CORE = [[0.5, 0.12], [1, 0.08], [1.4, 0.04], [2.5, 0.035], [3.5, 0.01], [4.3, 0.06], [5.2, 0.13], [6.2, 0.175], [7.5, 0.21], [9.6, 0.235], [12.7, 0.28], [17, 0.37], [20.6, 0.45], [24, 0.5], [28, 0.54], [31, 0.575], [34, 0.598], [38, 0.61], [42, 0.614]];
const WIDTH = [[0.5, 0.9], [1.2, 0.84], [2, 0.75], [2.6, 0.69], [3.5, 0.61], [6, 0.57], [9.6, 0.52], [12.7, 0.48], [20, 0.48], [34, 0.5]];
const POWER = [[0.5, 6], [1.2, 5], [2, 3.6], [2.6, 2.7], [3.5, 1.9], [6, 1.9], [9.6, 2.1]];
const WALL = [[390, 0.614], [470, 0.58], [540, 0.5], [660, 0.44], [800, 0.33], [890, 0.32], [960, 0.42], [1010, 0.49], [1060, 0.47], [1130, 0.36], [1220, 0.25], [1320, 0.22], [1431, 0.19]];

const FW = 1431;
const FH = 573;
const CX = 287;
const CY = 286;
const R = 28.5;

const speedAt = (d, s, y, col) => {
  const r2 = Math.max(1, s * s + y * y);
  const cos2 = (s * s - y * y) / r2;
  const sin2 = (2 * s * y) / r2;
  let e = Math.hypot(1 - cos2 / r2, sin2 / r2) - 1;
  if (e < 0) e *= 1 - smooth(s, -0.3, 1);
  else e *= 1 - 0.7 * smooth(s, -0.1, 0.8) * Math.exp(-Math.pow((Math.sqrt(r2) - 1) / 0.45, 2));
  let v = FREE * (1 + e);
  v += 0.012 * Math.exp(-Math.pow((s - 1) / 3.6, 2) - Math.pow(y / 8, 4)) * smooth(y, 1.5, 4);
  v += 0.075 * Math.exp(-Math.pow((s - 1.4) / 2, 2) - Math.pow((y - 1.5) / 2.2, 2)) * smooth(s, -0.7, 1.7);
  v += 0.02 * Math.exp(-Math.pow((s - 12) / 11, 2) - Math.pow(y / 7, 2)) * smooth(s, 0, 3);
  v -= 0.003 * Math.exp(-Math.pow((s - 35) / 4, 2) - Math.pow(y / 4, 2));
  if (s > 0.3) {
    const g = Math.exp(-Math.pow(y / col.w, col.p)) * smooth(s, 0.35, 0.6);
    v -= (v - col.c) * g;
    v += 0.17 * Math.exp(-Math.pow((s - 1.75) / 0.5, 2) - Math.pow(y / 0.13, 2));
  }
  v -= (FREE - col.wall) * Math.exp(-Math.pow(d / 8.5, 2));
  return v;
};

const VelocityField = () => {
  const ref = useRef(null);
  useLayoutEffect(() => {
    const ctx = ref.current.getContext("2d");
    const img = ctx.createImageData(FW, FH);
    const palette = Array.from({ length: 257 }, (_, i) => rampColor(i / 256));
    for (let px = 0; px < FW; px++) {
      const s = (px - CX) / R;
      const col = { c: lookup(CORE, s), w: lookup(WIDTH, s), p: lookup(POWER, s), wall: lookup(WALL, px) };
      for (let py = 0; py <= CY; py++) {
        const y = (CY - py) / R;
        const inside = s * s + y * y < 1;
        const v = clamp(speedAt(py, s, y, col), 0, 1);
        const c = palette[Math.round(v * 256)];
        [py, FH - 1 - py].forEach((row) => {
          const k = (row * FW + px) * 4;
          img.data[k] = c[0];
          img.data[k + 1] = c[1];
          img.data[k + 2] = c[2];
          img.data[k + 3] = inside ? 0 : 255;
        });
      }
    }
    ctx.putImageData(img, 0, 0);
    ctx.strokeStyle = "#000";
    ctx.lineWidth = 1.2;
    ctx.strokeRect(0.5, 0.5, FW - 1, FH - 1);
    ctx.beginPath();
    ctx.arc(CX, CY, R, 0, Math.PI * 2);
    ctx.stroke();
  }, []);
  return <FieldCanvas ref={ref} width={FW} height={FH} aria-label="U" />;
};

/* ---------- data ---------- */
const TABS = ["主屏幕", "参数定义", "二维建模", "材料属性", "网格剖分", "分析", "结果展示"];
const ROWS = [
  [["line", "tee"], "mesh", "各向异性1"],
  [["line", "plus"], "fluidMesh", "流体网格"],
  [["minus"], "fluid", "流体分析"],
  [["line", "tee"], "wrench", "瞬态单相流"],
  [["line", "plus"], "solver", "求解器参数"],
  [["line", "plus"], "discrete", "离散"],
  [["line", "plus"], "boundary", "边界条件"],
  [["line", "minus"], "initial", "初始条件"],
  [["line", "line", "end"], "field", "初始场"],
  [["line", "tee"], "operation", "操作条件"],
  [["line", "tee"], "monitor", "监控"],
  [["line", "tee"], "control", "计算控制"],
  [["line", "end"], "residual", "残差曲线"],
  [["minus"], "results", "结果展示"],
  [["none", "minus"], "model", "结果模型:流体分析"],
  [["none", "none", "tee"], "stream", "流线"],
  [["none", "none", "tee"], "streamOff", "流线1", { dim: true }],
  [["none", "none", "end"], "cloud", "云图", { selected: true }],
];
const PROPS = [
  ["数据源", '[{"DataSet":["internalMesh","inlet","outlet"]}]'],
  ["偏移系数", "0"],
  ["形状偏移", "否"],
  ["标签", "云图"],
];
const TICKS = ["8.145e+00", "5.431e+00", "2.716e+00", "2.156e-03"];
const BANDS = Array.from({ length: 64 }, (_, i) => `rgb(${rampColor(1 - i / 63).join(",")})`);

const Item = ({ slots, icon, label, dim, selected }) => {
  const Icon = TreeIcons[icon];
  return (
    <TreeRow role="treeitem" aria-selected={!!selected}>
      {slots.map((kind, i) => (
        <Slot key={i} $kind={kind}>
          {(kind === "plus" || kind === "minus") && (
            <Expander aria-label={label}>
              <Svg w={14} h={14}>
                <circle cx="7" cy="7" r="6.400" fill="#fff" stroke="#9aa0a6" />
                <path d={kind === "plus" ? "M3.500 7h7M7 3.500v7" : "M3.500 7h7"} stroke="#5a6070" strokeWidth="1.600" />
              </Svg>
            </Expander>
          )}
        </Slot>
      ))}
      <Node $dim={dim} $selected={selected}>
        <Icon />
        {label}
      </Node>
    </TreeRow>
  );
};

const Tool = ({ icon, label }) => <IconButton aria-label={label}>{icon}</IconButton>;

export default function App() {
  return (
    <Page>
      <GlobalStyle />
      <Gradients />
      <TitleBar>
        <QuickAccess>
          <Logo />
          <Tool label="新建" icon={<NewIcon />} />
          <Tool label="打开" icon={<OpenIcon />} />
          <Tool label="保存" icon={<SaveIcon />} />
          <Tool label="撤销" icon={<UndoIcon />} />
          <Tool label="撤销列表" icon={<Caret />} />
          <Tool label="重做" icon={<UndoIcon flip />} />
          <Tool label="重做列表" icon={<Caret />} />
          <Rule />
          <Tool label="刷新" icon={<RefreshIcon />} />
          <Tool label="更多" icon={<MoreIcon />} />
        </QuickAccess>
        <AppName>Simdroid</AppName>
        <WindowButton aria-label="最小化">
          <Svg w={16} h={16}><path d="M0 7.500h16" stroke="#1a1a1a" strokeWidth="1.500" /></Svg>
        </WindowButton>
        <WindowButton aria-label="还原">
          <Svg w={16} h={16}><path d="M1 4h11v11H1zM4 4V1h11v11h-3" stroke="#1a1a1a" strokeWidth="1.500" /></Svg>
        </WindowButton>
        <WindowButton aria-label="关闭">
          <Svg w={16} h={16}><path d="m1 1 14 14M15 1 1 15" stroke="#1a1a1a" strokeWidth="1.500" /></Svg>
        </WindowButton>
      </TitleBar>

      <TabBar>
        <Tab $file>文件</Tab>
        {TABS.map((t) => <Tab key={t} $active={t === "结果展示"}>{t}</Tab>)}
        <Collapse aria-label="折叠功能区">
          <Svg w={14} h={12}>
            <path d="M1 7.500 7 1.500l6 6v3H9.500L7 8l-2.500 2.500H1z" stroke="#7b8290" strokeWidth="1.600" strokeLinejoin="round" />
          </Svg>
        </Collapse>
      </TabBar>

      <Ribbon>
        <RibbonGroup>
          <RibbonButton $min={113}><IconBox><AppIcon /></IconBox>App开发器</RibbonButton>
        </RibbonGroup>
        <RibbonGroup>
          <RibbonButton $min={74}><IconBox><ContourIcon /></IconBox>等值线</RibbonButton>
          <RibbonButton><IconBox><CloudIcon /></IconBox>云图</RibbonButton>
          <RibbonButton><IconBox><VectorIcon /></IconBox>矢量</RibbonButton>
          <RibbonButton><IconBox><StreamIcon /></IconBox>流线</RibbonButton>
        </RibbonGroup>
        <RibbonGroup>
          <RibbonButton $min={94}>
            <IconBox><CurveIcon /></IconBox>
            选点曲线
            <Svg w={8} h={5}><path d="M0 0h8L4 5z" fill="#6e6e6e" /></Svg>
          </RibbonButton>
        </RibbonGroup>
      </Ribbon>

      <Work>
        <Side>
          <PanelHead>
            <PanelTitle>组合浏览器</PanelTitle>
            <Tool label="展开" icon={<Svg w={16} h={14}><path d="M0 0l8 7-8 7zM8 0l8 7-8 7z" fill="#34495e" /></Svg>} />
            <Tool label="关闭" icon={<Svg w={13} h={13}><path d="m1.500 1.500 10 10M11.500 1.500l-10 10" stroke="#34495e" strokeWidth="2.800" /></Svg>} />
          </PanelHead>
          <PanelTabs>
            <PanelTab $active>模型</PanelTab>
            <PanelTab>任务</PanelTab>
          </PanelTabs>
          <Lower>
            <TreeBox>
              <Tree role="tree">
                {ROWS.map(([slots, icon, label, opts]) => (
                  <Item key={icon + label} slots={slots} icon={icon} label={label} {...opts} />
                ))}
              </Tree>
              <ScrollColumn>
                <Svg w={8} h={5}><path d="M0 5h8L4 0z" fill="#6f8088" /></Svg>
                <ScrollThumb />
                <Svg w={8} h={5}><path d="M0 0h8L4 5z" fill="#6f8088" /></Svg>
              </ScrollColumn>
            </TreeBox>
            <PropBox>
              <PropTable>
                <thead>
                  <tr>
                    <HeadCell $w="150px">属性</HeadCell>
                    <HeadCell>值</HeadCell>
                  </tr>
                </thead>
                <tbody>
                  <tr><GroupCell colSpan={2}>基本信息</GroupCell></tr>
                  {PROPS.map(([name, value], i) => (
                    <PropRow key={name} $alt={i % 2 === 1}>
                      <PropName scope="row">
                        <PropNameInner>
                          <Slot $kind={i === PROPS.length - 1 ? "end" : "tee"} />
                          <PropLabel>{name}</PropLabel>
                        </PropNameInner>
                      </PropName>
                      <PropValue>{value}</PropValue>
                    </PropRow>
                  ))}
                </tbody>
              </PropTable>
            </PropBox>
            <BottomTabs>
              <PanelTab>视图</PanelTab>
              <PanelTab $dark>数据</PanelTab>
            </BottomTabs>
          </Lower>
        </Side>

        <Main>
          <Toolbar>
            <Tool label="截图" icon={<CameraIcon />} />
            <Rule $h={35} />
            <ToolGroup $gap={7} $after={1}>
              <Tool label="查找" icon={<SearchIcon />} />
              <Tool label="清除" icon={<BroomIcon />} />
              <Chevron />
            </ToolGroup>
            <Rule $h={35} />
            <ToolGroup $gap={4} $after={4}>
              <Tool label="显示" icon={<BoxIcon />} />
              <Chevron />
            </ToolGroup>
            <ToolGroup $gap={4} $after={1}>
              <Tool label="着色" icon={<CubeIcon />} />
              <Chevron />
            </ToolGroup>
            <Rule $h={35} />
            <ToolGroup $gap={13}>
              <Tool label="适应窗口" icon={<FitIcon />} />
              <ToolGroup $gap={4}>
                <Tool label="视角" icon={<AxesIcon />} />
                <Chevron />
              </ToolGroup>
              <Tool label="顺时针" icon={<RotateIcon />} />
              <Tool label="逆时针" icon={<RotateIcon flip />} />
            </ToolGroup>
            <Rule $h={35} $dotted />
            <ToolGroup $gap={10} $before={6} $after={1}>
              <ToolGroup $gap={14}>
                <FieldLabel htmlFor="time">时间:</FieldLabel>
                <Combo>
                  <Select id="time" defaultValue="0.3"><option>0.3</option></Select>
                  <Chevron />
                </Combo>
              </ToolGroup>
              <Slider type="range" aria-label="时间步" min="0" max="40" defaultValue="3" />
              <Spin>
                <SpinInput type="number" aria-label="步数" defaultValue="3" />
                <SpinArrows><Chevron up /><Chevron /></SpinArrows>
              </Spin>
            </ToolGroup>
            <Rule $h={41} />
            <ToolGroup $gap={17} $before={9} $after={4}>
              <ToolGroup $gap={12}>
                <Tool label="录制" icon={<VideoIcon />} />
                <Tool label="第一帧" icon={<FirstIcon />} />
              </ToolGroup>
              <Tool label="上一帧" icon={<StepIcon />} />
              <Tool label="播放" icon={<PlayIcon />} />
              <Tool label="下一帧" icon={<StepIcon flip />} />
              <Tool label="最后一帧" icon={<FirstIcon flip />} />
            </ToolGroup>
            <ToolGroup $gap={2}>
              <LoopButton aria-label="循环"><LoopIcon /></LoopButton>
              <Combo>
                <Select aria-label="速度" defaultValue="4x"><option>4x</option></Select>
                <Chevron />
              </Combo>
            </ToolGroup>
          </Toolbar>

          <Viewport>
            <VelocityField />
            <Triad>
              <Svg w={66} h={70}>
                <path d="M10 60V16" stroke="#00f000" />
                <path d="M6 20h8L10 10z" fill="#00f000" />
                <path d="M10 60.500h42" stroke="#f00000" />
                <path d="M50 56.500v8l10-4z" fill="#f00000" />
                <rect x="6" y="56" width="8" height="8" rx="2" fill="#0000f0" />
                <g fontFamily="DejaVu Sans Mono, monospace" fontWeight="700" fontSize="13">
                  <text x="13" y="14" fill="#00e800">Y</text>
                  <text x="12" y="54" fill="#0000f0">Z</text>
                  <text x="53" y="54" fill="#f00000">X</text>
                </g>
              </Svg>
            </Triad>
            <StepMark>:</StepMark>
            <Legend>
              <LegendTitle>U<br />( m/s )</LegendTitle>
              <Scale>
                <Ramp>{BANDS.map((c, i) => <Band key={i} style={{ background: c }} />)}</Ramp>
                <Ticks>{TICKS.map((t) => <span key={t}>{t}</span>)}</Ticks>
              </Scale>
            </Legend>
          </Viewport>
        </Main>
      </Work>

      <StatusBar>6.1 m x 3.5 m</StatusBar>
      <BottomEdge />
    </Page>
  );
}
